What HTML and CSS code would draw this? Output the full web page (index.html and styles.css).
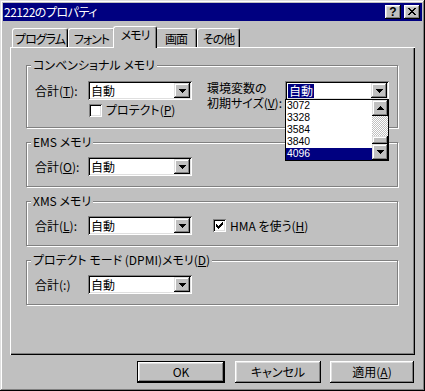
FILE: index.html
```html
<!DOCTYPE html>
<html lang="ja">
<head>
  <meta charset="UTF-8">
  <title>22122のプロパティ</title>
  <link rel="stylesheet" href="styles.css">
</head>
<body>
  <div class="window">
    <div class="titlebar">
      <span class="title">22122のプロパティ</span>
      <div class="caption-buttons">
        <div class="caption-btn help">?</div>
        <div class="caption-btn close">
          <svg width="16" height="14" viewBox="0 0 16 14"><path d="M4 3h2v1H4z M10 3h2v1h-2z M5 4h2v1H5z M9 4h2v1H9z M6 5h4v1H6z M7 6h2v1H7z M6 7h4v1H6z M5 8h2v1H5z M9 8h2v1H9z M4 9h2v1H4z M10 9h2v1h-2z" fill="#000"/></svg>
        </div>
      </div>
    </div>

    <div class="body">
      <div class="tabs">
        <div class="tab tab-program">プログラム</div>
        <div class="tab tab-font">フォント</div>
        <div class="tab tab-memory active">メモリ</div>
        <div class="tab tab-screen">画面</div>
        <div class="tab tab-other">その他</div>
      </div>

      <div class="panel">
        <!-- コンベンショナル メモリ -->
        <fieldset class="group group-conv">
          <legend>コンベンショナル メモリ</legend>
          <div class="conv-body">
            <div class="conv-left">
              <div class="field">
                <span class="label">合計(<u>T</u>):</span>
                <div class="combo">
                  <span class="combo-text">自動</span>
                  <span class="combo-btn"><svg width="7" height="4" viewBox="0 0 7 4"><path d="M0 0h7v1H0z M1 1h5v1H1z M2 2h3v1H2z M3 3h1v1H3z" fill="#000"/></svg></span>
                </div>
              </div>
              <div class="check check-protect">
                <span class="check-box"></span>
                <span>プロテクト(<u>P</u>)</span>
              </div>
            </div>
            <div class="conv-right">
              <div class="env-label">
                <span>環境変数の</span>
                <span>初期サイズ(<u>V</u>):</span>
              </div>
              <div class="combo">
                <span class="combo-text"><span class="combo-sel">自動</span></span>
                <span class="combo-btn"><svg width="7" height="4" viewBox="0 0 7 4"><path d="M0 0h7v1H0z M1 1h5v1H1z M2 2h3v1H2z M3 3h1v1H3z" fill="#000"/></svg></span>
                <div class="dropdown">
                  <div class="list">
                    <div class="item">3072</div>
                    <div class="item">3328</div>
                    <div class="item">3584</div>
                    <div class="item">3840</div>
                    <div class="item selected">4096</div>
                  </div>
                  <div class="scrollbar">
                    <span class="sb-btn"><svg width="7" height="4" viewBox="0 0 7 4"><path d="M3 0h1v1H3z M2 1h3v1H2z M1 2h5v1H1z M0 3h7v1H0z" fill="#000"/></svg></span>
                    <span class="sb-track"><span class="sb-thumb"></span></span>
                    <span class="sb-btn"><svg width="7" height="4" viewBox="0 0 7 4"><path d="M0 0h7v1H0z M1 1h5v1H1z M2 2h3v1H2z M3 3h1v1H3z" fill="#000"/></svg></span>
                  </div>
                </div>
              </div>
            </div>
          </div>
        </fieldset>

        <!-- EMS メモリ -->
        <fieldset class="group">
          <legend>EMS メモリ</legend>
          <div class="group-body">
            <div class="field">
              <span class="label">合計(<u>O</u>):</span>
              <div class="combo">
                <span class="combo-text">自動</span>
                <span class="combo-btn"><svg width="7" height="4" viewBox="0 0 7 4"><path d="M0 0h7v1H0z M1 1h5v1H1z M2 2h3v1H2z M3 3h1v1H3z" fill="#000"/></svg></span>
              </div>
            </div>
          </div>
        </fieldset>

        <!-- XMS メモリ -->
        <fieldset class="group">
          <legend>XMS メモリ</legend>
          <div class="group-body">
            <div class="field">
              <span class="label">合計(<u>L</u>):</span>
              <div class="combo">
                <span class="combo-text">自動</span>
                <span class="combo-btn"><svg width="7" height="4" viewBox="0 0 7 4"><path d="M0 0h7v1H0z M1 1h5v1H1z M2 2h3v1H2z M3 3h1v1H3z" fill="#000"/></svg></span>
              </div>
            </div>
            <div class="check check-hma">
              <span class="check-box">
                <svg width="13" height="13" viewBox="0 0 13 13"><path d="M9 3h1v3H9z M8 4h1v3H8z M7 5h1v3H7z M6 6h1v3H6z M5 7h1v3H5z M4 6h1v3H4z M3 5h1v3H3z" fill="#000"/></svg>
              </span>
              <span>HMA を使う(<u>H</u>)</span>
            </div>
          </div>
        </fieldset>

        <!-- プロテクト モード -->
        <fieldset class="group">
          <legend>プロテクト モード (DPMI)メモリ(<u>D</u>)</legend>
          <div class="group-body">
            <div class="field">
              <span class="label">合計(:)</span>
              <div class="combo">
                <span class="combo-text">自動</span>
                <span class="combo-btn"><svg width="7" height="4" viewBox="0 0 7 4"><path d="M0 0h7v1H0z M1 1h5v1H1z M2 2h3v1H2z M3 3h1v1H3z" fill="#000"/></svg></span>
              </div>
            </div>
          </div>
        </fieldset>
      </div>

      <div class="buttons">
        <div class="btn btn-ok default"><span>OK</span></div>
        <div class="btn btn-cancel"><span>キャンセル</span></div>
        <div class="btn btn-apply"><span>適用(<u>A</u>)</span></div>
      </div>
    </div>
  </div>
</body>
</html>
```

FILE: styles.css
```css
* {
  box-sizing: border-box;
}

body {
  margin: 0;
  font-family: "Noto Sans CJK JP", "Noto Sans", sans-serif;
  font-size: 12px;
  font-feature-settings: "palt";
  color: #000;
  background-color: #c0c0c0;
}

u {
  text-decoration-thickness: 1px;
  text-underline-offset: 1px;
}

.window {
  width: 425px;
  height: 391px;
  padding: 3px;
  background-color: #c0c0c0;
  box-shadow: inset -1px -1px #000, inset 1px 1px #dfdfdf,
              inset -2px -2px #808080, inset 2px 2px #fff;
}

/* title bar */
.titlebar {
  height: 18px;
  background-color: #000080;
  color: #fff;
  display: flex;
  align-items: center;
  justify-content: space-between;
  padding: 0 2px 0 1px;
}

.title {
  line-height: 18px;
  letter-spacing: -0.5px;
}

.caption-buttons {
  display: flex;
  gap: 3px;
}

.caption-btn {
  width: 16px;
  height: 14px;
  background-color: #c0c0c0;
  color: #000;
  box-shadow: inset -1px -1px #000, inset 1px 1px #fff,
              inset -2px -2px #808080, inset 2px 2px #dfdfdf;
  display: flex;
  align-items: center;
  justify-content: center;
}

.caption-btn.help {
  font-family: "Liberation Sans", sans-serif;
  font-weight: bold;
  font-size: 12px;
  line-height: 14px;
}

.caption-btn svg {
  display: block;
}

.body {
  padding: 5px 7px 0;
}

/* tabs */
.tabs {
  display: flex;
  align-items: flex-end;
  height: 21px;
  padding-left: 2px;
}

.tab {
  height: 19px;
  border: 1px solid #fff;
  border-bottom: none;
  border-right-color: #000;
  border-radius: 3px 3px 0 0;
  box-shadow: inset -1px 0 #808080;
  text-align: center;
  line-height: 17px;
  padding-top: 1px;
  white-space: nowrap;
  letter-spacing: -1px;
  overflow: hidden;
}

.tab.active {
  height: 22px;
  margin: 0 -2px -1px;
  position: relative;
  z-index: 1;
  background-color: #c0c0c0;
  padding-top: 0;
  line-height: 16px;
}

.tab-program { width: 56px; }
.tab-font { width: 47px; }
.tab-memory { width: 44px; }
.tab-screen { width: 42px; }
.tab-other { width: 43px; }

/* panel */
.panel {
  height: 308px;
  background-color: #c0c0c0;
  box-shadow: inset 1px 1px #fff, inset -1px -1px #000, inset -2px -2px #808080;
  padding: 11px 0 0 16px;
  display: flex;
  flex-direction: column;
  gap: 7px;
}

.group {
  width: 372px;
  margin: 0;
  padding: 0 8px 10px;
  border: 1px solid #808080;
  box-shadow: inset 1px 1px #fff, 1px 1px #fff;
  min-inline-size: auto;
}

.group legend {
  padding: 0 2px;
  margin-left: -4px;
  line-height: 14px;
  background-color: #c0c0c0;
}

.group-body {
  display: flex;
  align-items: center;
  padding-top: 8px;
}

.conv-body {
  display: flex;
  padding-top: 9px;
}

.conv-left {
  width: 172px;
}

.conv-right {
  display: flex;
  align-items: flex-start;
}

.field {
  display: flex;
  align-items: center;
  width: 172px;
}

.label {
  width: 53px;
  line-height: 19px;
}

.env-label {
  width: 78px;
  display: flex;
  flex-direction: column;
  gap: 1px;
  line-height: 14px;
}

/* combo box */
.combo {
  width: 104px;
  height: 19px;
  background-color: #fff;
  box-shadow: inset 1px 1px #808080, inset -1px -1px #fff,
              inset 2px 2px #000, inset -2px -2px #dfdfdf;
  display: flex;
  align-items: center;
  padding: 2px;
  position: relative;
}

.combo-text {
  flex: 1;
  padding-left: 1px;
  line-height: 15px;
}

.combo-sel {
  display: inline-block;
  background-color: #000080;
  color: #fff;
  padding: 0 1px;
  line-height: 14px;
}

.combo-btn,
.sb-btn {
  width: 16px;
  height: 15px;
  background-color: #c0c0c0;
  box-shadow: inset -1px -1px #000, inset 1px 1px #dfdfdf,
              inset -2px -2px #808080, inset 2px 2px #fff;
  display: flex;
  align-items: center;
  justify-content: center;
}

.combo-btn svg,
.sb-btn svg {
  display: block;
}

/* open list */
.dropdown {
  position: absolute;
  left: 0;
  top: 18px;
  width: 104px;
  height: 62px;
  border: 1px solid #000;
  background-color: #fff;
  display: flex;
  z-index: 2;
}

.list {
  flex: 1;
}

.item {
  height: 12px;
  font-family: "Liberation Sans", sans-serif;
  font-size: 10.4px;
  line-height: 12px;
  padding-left: 1px;
}

.item.selected {
  background-color: #000080;
  color: #fff;
}

.scrollbar {
  width: 16px;
  display: flex;
  flex-direction: column;
}

.sb-btn {
  height: 16px;
}

.sb-track {
  flex: 1;
  display: flex;
  flex-direction: column;
  justify-content: flex-end;
  background-color: #fff;
  background-image: repeating-conic-gradient(#c0c0c0 0 25%, #fff 0 50%);
  background-size: 2px 2px;
}

.sb-thumb {
  height: 8px;
  background-color: #c0c0c0;
  box-shadow: inset -1px -1px #000, inset 1px 1px #dfdfdf,
              inset -2px -2px #808080, inset 2px 2px #fff;
}

/* check boxes */
.check {
  display: flex;
  align-items: center;
  gap: 4px;
  line-height: 14px;
}

.check-protect {
  margin: 3px 0 0 54px;
}

.check-hma {
  margin-left: 6px;
}

.check-box {
  width: 13px;
  height: 13px;
  background-color: #fff;
  box-shadow: inset 1px 1px #808080, inset -1px -1px #fff,
              inset 2px 2px #000, inset -2px -2px #dfdfdf;
}

.check-box svg {
  display: block;
}

/* dialog buttons */
.buttons {
  display: flex;
  justify-content: flex-end;
  margin-top: 6px;
  padding-right: 1px;
}

.btn {
  height: 22px;
  background-color: #c0c0c0;
  box-shadow: inset -1px -1px #000, inset 1px 1px #fff,
              inset -2px -2px #808080, inset 2px 2px #dfdfdf;
  display: flex;
  align-items: center;
  justify-content: center;
  line-height: 16px;
}

.btn.default {
  border: 1px solid #000;
}

.btn-ok { width: 88px; }
.btn-cancel { width: 86px; margin-left: 10px; }
.btn-apply { width: 84px; margin-left: 9px; }
```
